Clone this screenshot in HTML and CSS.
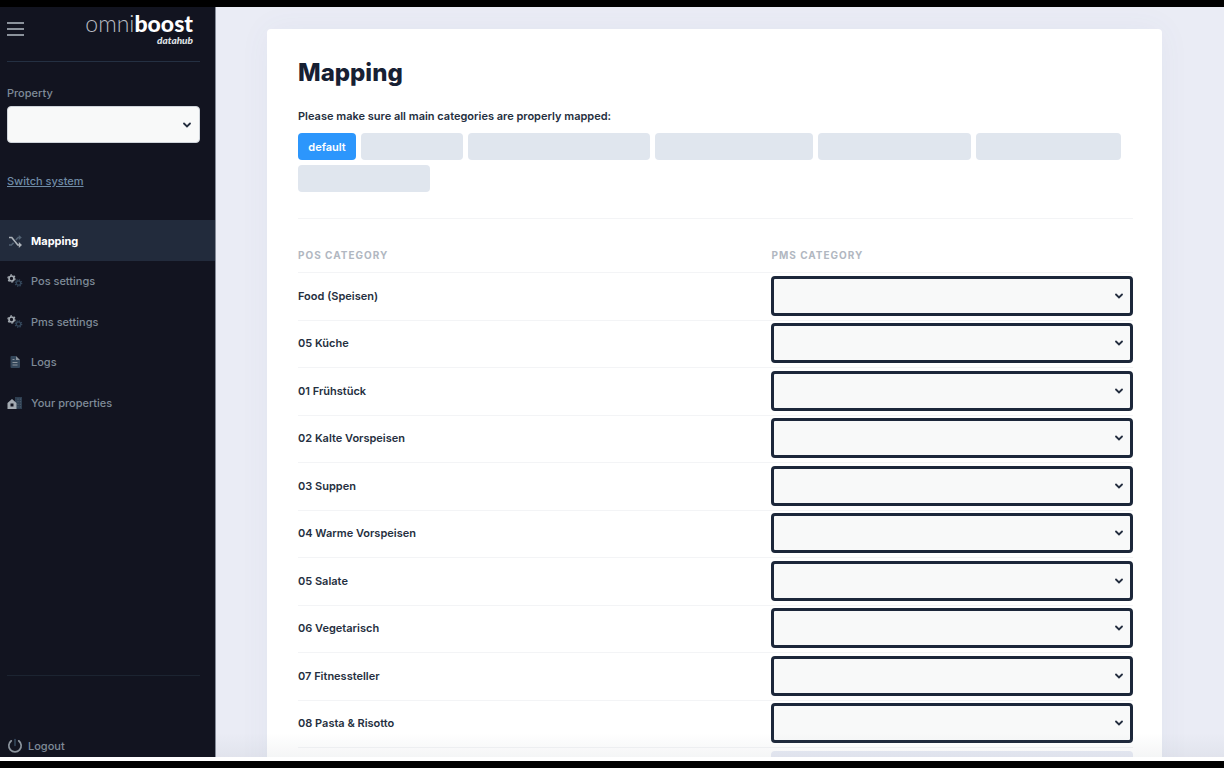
FILE: index.html
```html
<!DOCTYPE html>
<html lang="en">
<head>
<meta charset="utf-8">
<meta name="viewport" content="width=device-width, initial-scale=1">
<title>Mapping</title>
<link rel="stylesheet" href="styles.css">
</head>
<body>
<div class="frame">
  <aside class="sidebar">
    <header class="brand">
      <button class="menu-button" type="button" aria-label="Menu">
        <svg width="17" height="16" viewBox="0 0 17 16" fill="none" stroke="#8b929b" stroke-width="2"><path d="M0 2h17M0 8h17M0 14h17"/></svg>
      </button>
      <a class="logo" href="#">
        <span class="logo-name">omni<b>boost</b></span>
        <span class="logo-sub">datahub</span>
      </a>
    </header>
    <div class="property">
      <label for="property">Property</label>
      <select id="property" class="select property-select"><option></option></select>
    </div>
    <a class="switch" href="#">Switch system</a>
    <nav class="nav">
      <a class="nav-item active" href="#">
        <svg class="icon" viewBox="0 0 16 16" fill="none" stroke-width="1.6"><path stroke="#526273" d="M2 12h2.400l2.200-2.200M8.800 7l2.400-2.500H13"/><path fill="#526273" d="M11.800 2l3 2.500-3 2.500z"/><path stroke="#adb3ba" d="M2 4.500h2.800l6 7.500H13"/><path fill="#adb3ba" d="M11.800 9l3.200 3-3.200 3z"/></svg>
        Mapping
      </a>
      <a class="nav-item" href="#">
        <svg class="icon" viewBox="0 0 16 16" fill="none"><circle cx="4.500" cy="5.500" r="2.500" stroke="#a4abb2" stroke-width="1.700"/><circle cx="4.500" cy="5.500" r="3.600" stroke="#a4abb2" stroke-width="1.200" stroke-dasharray="1.9 1.87"/><circle cx="11.500" cy="10" r="2.100" stroke="#34475b" stroke-width="1.200"/><circle cx="11.500" cy="10" r="3.200" stroke="#34475b" stroke-width="1.300" stroke-dasharray="1.3 1.21"/></svg>
        Pos settings
      </a>
      <a class="nav-item" href="#">
        <svg class="icon" viewBox="0 0 16 16" fill="none"><circle cx="4.500" cy="5.500" r="2.500" stroke="#a4abb2" stroke-width="1.700"/><circle cx="4.500" cy="5.500" r="3.600" stroke="#a4abb2" stroke-width="1.200" stroke-dasharray="1.9 1.87"/><circle cx="11.500" cy="10" r="2.100" stroke="#34475b" stroke-width="1.200"/><circle cx="11.500" cy="10" r="3.200" stroke="#34475b" stroke-width="1.300" stroke-dasharray="1.3 1.21"/></svg>
        Pms settings
      </a>
      <a class="nav-item" href="#">
        <svg class="icon" viewBox="0 0 16 16"><path fill="#34475b" d="M4.500 2H9v4h4v7a1 1 0 0 1-1 1H4.500a1 1 0 0 1-1-1V3a1 1 0 0 1 1-1z"/><path fill="#8b949d" d="M9 2l4 4H9z"/><path stroke="#8b949d" stroke-width="1" d="M5.500 8.500h5M5.500 11h5M5.500 5.500h2"/></svg>
        Logs
      </a>
      <a class="nav-item" href="#">
        <svg class="icon" viewBox="0 0 16 16"><path fill="#2d3e50" d="M8 2h7v12H8z"/><path stroke="#526273" stroke-dasharray="1.2 1.4" d="M11 3.500v9M13.300 3.500v9"/><path fill="#a4abb2" fill-rule="evenodd" d="M0.500 8L5 4 9.500 8v6h-9zM3.500 8.500v3h3v-3z"/></svg>
        Your properties
      </a>
    </nav>
    <footer class="sidebar-footer">
      <a class="logout" href="#">
        <svg class="icon" viewBox="0 0 16 16" fill="none" stroke-linecap="round"><path stroke="#8b949d" stroke-width="1.700" d="M4.300 2.800a6.200 6.200 0 1 0 7.400 0"/><path stroke="#34475b" stroke-width="1.600" d="M8 1.500v6"/></svg>
        Logout
      </a>
    </footer>
  </aside>
  <main class="main">
    <section class="card">
      <h1>Mapping</h1>
      <p class="hint">Please make sure all main categories are properly mapped:</p>
      <div class="chips">
        <button class="chip selected" type="button">default</button>
        <button class="chip w102" type="button" aria-label="Category 2"></button>
        <button class="chip w182" type="button" aria-label="Category 3"></button>
        <button class="chip w158" type="button" aria-label="Category 4"></button>
        <button class="chip w153" type="button" aria-label="Category 5"></button>
        <button class="chip w145" type="button" aria-label="Category 6"></button>
        <button class="chip w132" type="button" aria-label="Category 7"></button>
      </div>
      <table class="map">
        <thead><tr><th scope="col">POS CATEGORY</th><th scope="col">PMS CATEGORY</th></tr></thead>
        <tbody>
          <tr><td><label for="c1">Food (Speisen)</label></td><td><select class="select" id="c1"><option></option></select></td></tr>
          <tr><td><label for="c2">05 Küche</label></td><td><select class="select" id="c2"><option></option></select></td></tr>
          <tr><td><label for="c3">01 Frühstück</label></td><td><select class="select" id="c3"><option></option></select></td></tr>
          <tr><td><label for="c4">02 Kalte Vorspeisen</label></td><td><select class="select" id="c4"><option></option></select></td></tr>
          <tr><td><label for="c5">03 Suppen</label></td><td><select class="select" id="c5"><option></option></select></td></tr>
          <tr><td><label for="c6">04 Warme Vorspeisen</label></td><td><select class="select" id="c6"><option></option></select></td></tr>
          <tr><td><label for="c7">05 Salate</label></td><td><select class="select" id="c7"><option></option></select></td></tr>
          <tr><td><label for="c8">06 Vegetarisch</label></td><td><select class="select" id="c8"><option></option></select></td></tr>
          <tr><td><label for="c9">07 Fitnessteller</label></td><td><select class="select" id="c9"><option></option></select></td></tr>
          <tr><td><label for="c10">08 Pasta &amp; Risotto</label></td><td><select class="select" id="c10"><option></option></select></td></tr>
          <tr><td></td><td><select class="select plain" aria-label="PMS category"><option></option></select></td></tr>
        </tbody>
      </table>
    </section>
  </main>
</div>
</body>
</html>
```
FILE: styles.css
```css
* { box-sizing: border-box; }

body {
  margin: 0;
  background: #000;
  color: #252f40;
  font: 500 11px/16px Inter, "Open Sans", sans-serif;
}

a { color: inherit; text-decoration: none; }
button, select { font: inherit; }

.frame {
  display: flex;
  height: 100vh;
  overflow: hidden;
  border: solid #000;
  border-width: 7px 0;
  padding-bottom: 4px;
  background: #fff;
}

.sidebar {
  flex: none;
  display: flex;
  flex-direction: column;
  width: 216px;
  background: #121420;
  border-right: 1px solid #858b98;
  color: #7f8b98;
}

.brand {
  display: flex;
  justify-content: space-between;
  align-items: flex-start;
  height: 55px;
  margin: 0 15px 0 7px;
  padding-top: 4px;
  padding-right: 7px;
  border-bottom: 1px solid #243042;
}

.menu-button {
  margin-top: 10px;
  padding: 0;
  border: 0;
  background: none;
  line-height: 0;
}

.logo {
  display: flex;
  flex-direction: column;
  align-items: flex-end;
  color: #fff;
}
.logo-name { font: 300 23px/24px Lato, sans-serif; color: #b9bcc2; }
.logo-name b { font-weight: 900; color: #fff; }
.logo-sub { font: italic 900 10px/10px Lato, sans-serif; color: #dfe1e4; }

.property {
  display: flex;
  flex-direction: column;
  gap: 5px;
  margin: 23px 15px 0 7px;
}

.select {
  display: block;
  width: 100%;
  height: 40px;
  padding: 0 8px;
  appearance: none;
  border: 3px solid #1c273a;
  border-radius: 4px;
  background: #f8f9f9 url("data:image/svg+xml,%3Csvg xmlns='http://www.w3.org/2000/svg' width='8' height='6' fill='none' stroke='%23252f40' stroke-width='1.8' stroke-linecap='round'%3E%3Cpath d='M1 1.500l3 3 3-3'/%3E%3C/svg%3E") no-repeat right 7px center;
}
.select.property-select {
  height: 37px;
  border: 1px solid #cfd4da;
  background-position: right 8px center;
}
.select.plain { border-color: #e8ebf5; background: #e8ebf5; }

.switch {
  align-self: flex-start;
  margin: 30px 7px 0;
  color: #6f8ba6;
  text-decoration: underline;
}

.nav { margin-top: 31px; }
.nav-item {
  display: flex;
  align-items: center;
  gap: 8px;
  height: 41px;
  padding-left: 7px;
}
.nav-item:nth-child(even) { height: 40px; }
.nav-item.active { background: #222b3c; color: #fff; font-weight: 700; }
.icon { flex: none; width: 16px; height: 16px; }

.sidebar-footer {
  margin: auto 15px 0 7px;
  padding-top: 62px;
  border-top: 1px solid #1c2431;
}
.logout { display: flex; align-items: center; gap: 5px; padding-bottom: 3px; }

.main {
  position: relative;
  flex: 1;
  min-width: 0;
  padding: 22px 62px 0 51px;
  overflow: hidden;
  background: #eaecf5;
}
.main::after {
  content: "";
  position: absolute;
  inset: auto 0 0;
  height: 24px;
  background: linear-gradient(transparent, rgba(120, 130, 140, 0.08));
  pointer-events: none;
}

.card {
  padding: 28px 29px 0 31px;
  border-radius: 4px;
  background: #fff;
  box-shadow: 0 0 32px rgba(70, 90, 150, 0.05);
}

h1 {
  margin: 0;
  font-size: 24px;
  line-height: 32px;
  font-weight: 800;
  color: #172033;
}

.hint { margin: 19px 0 9px; font-weight: 600; }

.chips {
  display: flex;
  flex-wrap: wrap;
  gap: 5px;
  padding-bottom: 26px;
  border-bottom: 1px solid #f3f4f6;
}
.chip {
  height: 27px;
  padding: 0;
  border: 0;
  border-radius: 4px;
  background: #e0e6ee;
}
.chip.selected { width: 58px; background: #2c96fc; color: #fff; font-weight: 600; }
.w102 { width: 102px; }
.w132 { width: 132px; }
.w145 { width: 145px; }
.w153 { width: 153px; }
.w158 { width: 158px; }
.w182 { width: 182px; }

.map {
  width: 100%;
  margin-top: 20px;
  table-layout: fixed;
  border-spacing: 0;
}
.map th {
  height: 33px;
  padding: 0 0 2px;
  text-align: left;
  font-weight: 700;
  letter-spacing: 1px;
  font-size: 10px;
  color: #b1b7c1;
}
.map th:last-child { width: 43.3%; }
.map td {
  height: 48px;
  padding: 2px 0 4px;
  border-top: 1px solid #f3f4f6;
  font-weight: 600;
}
.map tr:nth-child(even) td { height: 47px; }
```
